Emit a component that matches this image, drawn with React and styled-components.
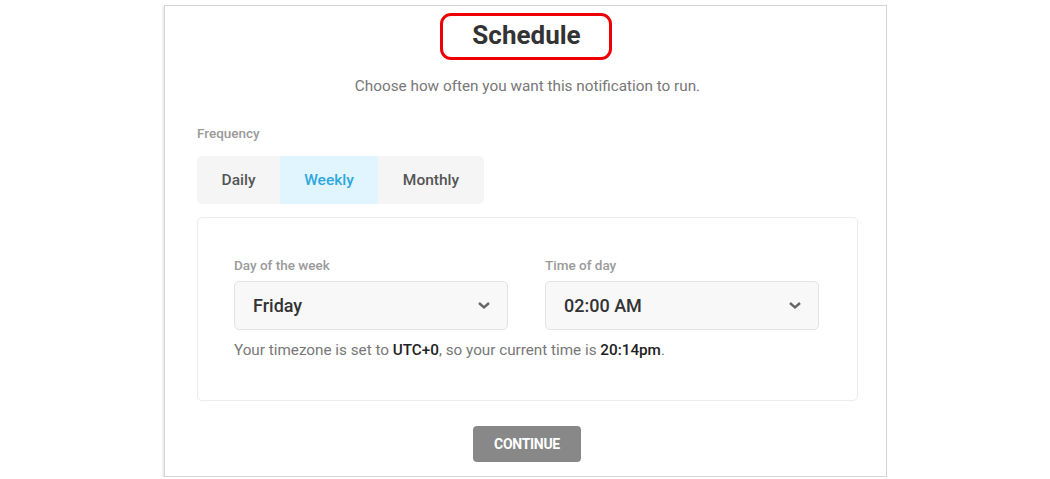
import React from 'react'
import styled, { createGlobalStyle } from 'styled-components'

const GlobalStyle = createGlobalStyle`
  body {
    margin: 0;
    background: #fff;
    font-family: Roboto, "Liberation Sans", Arial, sans-serif;
  }
`

const Card = styled.div`
  box-sizing: border-box;
  width: 723px;
  height: 472px;
  margin: 5px 0 0 164px;
  border: 1px solid #d4d4d4;
  box-shadow: -1px 1px 2px rgba(0, 0, 0, 0.12);
  background: #fff;
  padding: 7px 28px 0 32px;
  display: flex;
  flex-direction: column;
`

const TitleBox = styled.h1`
  align-self: center;
  box-sizing: border-box;
  width: 172px;
  height: 47px;
  margin: 0 0 0 -4px;
  border: 3px solid #ee0000;
  border-radius: 11px;
  display: flex;
  align-items: center;
  justify-content: center;
  padding: 0 0 3px 2px;
  font-size: 26px;
  font-weight: 700;
  color: #333;
`

const Subtitle = styled.p`
  margin: 16px 0 0;
  text-align: center;
  font-size: 15.3px;
  color: #777;
  line-height: 20px;
`

const Label = styled.div`
  font-size: 13.5px;
  font-weight: 500;
  color: #9a9a9a;
  line-height: 18px;
`

const FreqLabel = styled(Label)`
  margin-top: 28px;
`

const Tabs = styled.div`
  display: flex;
  align-self: flex-start;
  margin-top: 14px;
  background: #f5f5f5;
  border-radius: 5px;
  overflow: hidden;
`

const Tab = styled.div`
  box-sizing: border-box;
  width: ${p => p.$w}px;
  height: 48px;
  display: flex;
  align-items: center;
  justify-content: center;
  font-size: 15.5px;
  font-weight: 500;
  color: ${p => (p.$active ? '#2ea7e0' : '#555')};
  background: ${p => (p.$active ? '#e1f5fe' : 'transparent')};
`

const Panel = styled.div`
  margin-top: 13px;
  box-sizing: border-box;
  height: 184px;
  border: 1px solid #ececec;
  border-radius: 5px;
  padding: 38px 38px 0 36px;
`

const Fields = styled.div`
  display: grid;
  grid-template-columns: 1fr 1fr;
  column-gap: 37px;
`

const Field = styled.div`
  display: flex;
  flex-direction: column;
  gap: 7px;
`

const Select = styled.div`
  box-sizing: border-box;
  height: 49px;
  border: 1px solid #e3e3e3;
  border-radius: 5px;
  background: #f8f8f8;
  display: flex;
  align-items: center;
  justify-content: space-between;
  padding: 0 16px 0 18px;
  font-size: 18px;
  font-weight: 500;
  color: #333;
`

const Note = styled.p`
  margin: 10px 0 0;
  font-size: 15.25px;
  color: #777;
  line-height: 20px;

  b {
    color: #222;
    font-weight: 500;
  }
`

const Button = styled.button`
  align-self: center;
  margin: 25px 0 0 -1px;
  width: 108px;
  height: 36px;
  border: none;
  border-radius: 4px;
  background: #888;
  color: #fff;
  font-family: inherit;
  font-size: 14px;
  font-weight: 700;
  letter-spacing: -0.3px;
`

const Chevron = () => (
  <svg width="14" height="9" viewBox="0 0 14 9">
    <path d="M2 2l5 4.5L12 2" fill="none" stroke="#666" strokeWidth="2.4" />
  </svg>
)

const App = () => (
  <>
    <GlobalStyle />
    <Card>
      <TitleBox>Schedule</TitleBox>
      <Subtitle>Choose how often you want this notification to run.</Subtitle>
      <FreqLabel>Frequency</FreqLabel>
      <Tabs>
        <Tab $w={83}>Daily</Tab>
        <Tab $w={98} $active>Weekly</Tab>
        <Tab $w={106}>Monthly</Tab>
      </Tabs>
      <Panel>
        <Fields>
          <Field>
            <Label>Day of the week</Label>
            <Select>Friday<Chevron /></Select>
          </Field>
          <Field>
            <Label>Time of day</Label>
            <Select>02:00 AM<Chevron /></Select>
          </Field>
        </Fields>
        <Note>
          Your timezone is set to <b>UTC+0</b>, so your current time is <b>20:14pm</b>.
        </Note>
      </Panel>
      <Button>CONTINUE</Button>
    </Card>
  </>
)

export default App
